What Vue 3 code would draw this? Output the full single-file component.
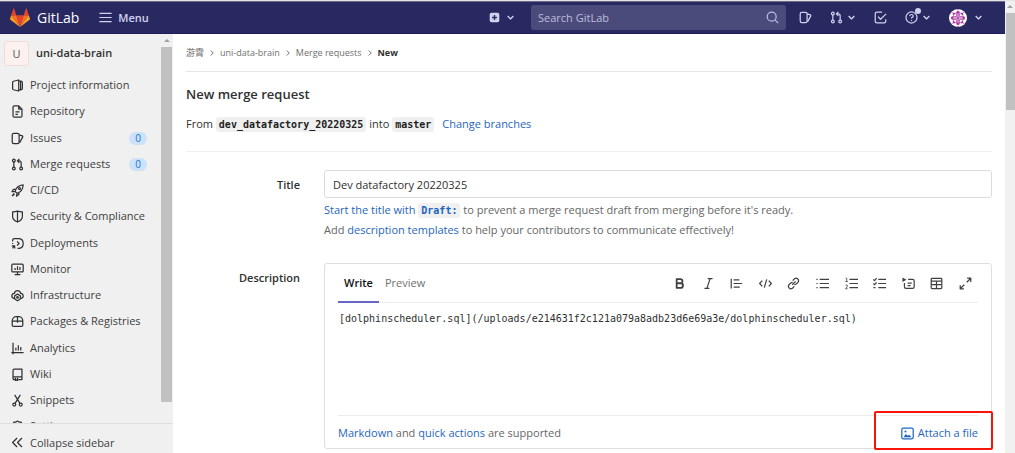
<script setup>
import { ref } from 'vue'

const icons = {
  project: '<path d="M9.5 1.2 3 2.8Q2 3.1 2 4v8q0 .9 1 1.2l6.500 1.600z"/><path d="M9.500 2.500H12Q14 2.500 14 4.500v7q0 2-2 2H9.500M11.800 3v10"/>',
  repository: '<path d="M9.500 1H4Q2.500 1 2.500 2.500v11Q2.500 15 4 15h8q1.500 0 1.500-1.500V5zM9.500 1v4h4M5.500 8.500h5M5.500 11.500h3"/>',
  issues: '<rect x="1.500" y="1.800" width="8.500" height="12.400" rx="2"/><path d="M10 3.500l4 1.300q.8.4.5 1.200L11 12.500H10"/>',
  merge: '<circle cx="3.500" cy="12.800" r="1.700"/><circle cx="3.500" cy="3.200" r="1.700"/><circle cx="12.500" cy="12.800" r="1.700"/><path d="M3.500 5v6M12.500 11V6q0-2.500-2.500-2.500H8M10.300 1 7.800 3.500l2.500 2.500"/>',
  rocket: '<path d="M5 9Q7 2 15 1.200 14.500 9 7.500 11.500zM6 6.500H3L1.200 9.500 5 9M9.700 10v3l-3 2 .8-3.500M3.800 11.500l-2.300 3 3-1.800"/><circle cx="10.500" cy="5.500" r="1.200"/>',
  shield: '<path d="M8 1.200Q5 2.300 2 2.200V8q0 4.500 6 6.800 6-2.300 6-6.800V2.200Q11 2.300 8 1.200zM8 1.200v13.600"/>',
  deploy: '<path d="M2 5.500V4q0-2 2-2h6q5 .5 5 6t-5 6H8M1 11h3.500v3M4.500 11.200Q2.500 12 2 14M1.300 8h1.500"/><path d="m7.500 5.500 2.500 2.500-2.500 2.500"/>',
  monitor: '<rect x="1" y="1.500" width="14" height="9.500" rx="1.200"/><path d="M5 6v2.500M8 4v4.500M11 5v3.500M8 11v3M4.500 14.300h7"/>',
  infra: '<path d="M4 11.500Q1 11 1 8.500T4 5.500Q5 2 8 2t4 3.500q3 .5 3 3t-3 3"/><path d="m8 6.300 3.500 2v4L8 14.500l-3.500-2.200v-4z"/><circle cx="8" cy="10.400" r="1"/>',
  package: '<path d="M1.500 7q0-1.500 1-3Q4 2 6 2h4q2 0 3.500 2 1 1.500 1 3v5.500q0 1.500-1.500 1.500H3q-1.500 0-1.500-1.500zM1.500 7.500h13M8 2v7.500"/>',
  analytics: '<path d="M2.500 1v12h13M.5 13h2v2M6 7v3.500M9 4v6.500M12 6v4.500"/>',
  wiki: '<path d="M13.500 11V1.500H4Q2.500 1.500 2.500 3v9.500M13.500 11H4q-1.500 0-1.500 1.600T4 14.200h1M13.500 11v3.200H9"/><path d="M5.500 12v3.500l1.300-1 1.300 1V12"/>',
  snippets: '<circle cx="4" cy="13" r="1.800"/><circle cx="12" cy="13" r="1.800"/><path d="m5 11.500 6.500-10.500M11 11.500 4.500 1"/>',
  settings: '<path d="m8 1.300 2 1.300 2.500-.1.800 2.400 1.700 2L14 9l.200 2.500-2.400.800L10 14H6l-1.800-1.700-2.400-.8L2 9 1 6.900l1.700-2 .8-2.400 2.500.1z"/><circle cx="8" cy="8" r="2.200"/>',
  collapse: '<path d="M7.500 2.500 2 8l5.500 5.500M13.500 2.500 8 8l5.500 5.500"/>',
  chevron: '<path d="m3 5.500 5 5 5-5"/>',
  right: '<path d="m5.500 3 5 5-5 5"/>',
  search: '<circle cx="7" cy="7" r="5.500"/><path d="m11 11 4 4"/>',
  todo: '<path d="M10 1.500H3.500q-2 0-2 2v9q0 2 2 2h9q2 0 2-2V10"/><path d="m5 7 3 3.200L15 3.500"/>',
  help: '<circle cx="8" cy="8" r="6.800"/><path d="M5.800 6.300Q6 4.300 8 4.300t2.200 1.900Q10.200 7.300 8 8.500v.8M8 11v1.300"/>',
  menu: '<path d="M.5 3h15M.5 8h15M.5 13h15"/>',
  plus: '<rect x="1" y="1" width="14" height="14" rx="2.500" fill="currentColor" stroke="none"/><path d="M8 4.500v7M4.500 8h7" stroke="#292961" stroke-width="2"/>',
  bold: '<path d="M4.500 2.500H9q2.600 0 2.600 2.600T9 7.700H4.500zM4.500 7.700h5q2.800 0 2.800 2.900T9.500 13.500h-5z" stroke-width="2.200"/>',
  italic: '<path d="M7 2h6M3 14h6M10 2 6 14"/>',
  quote: '<path d="M1.500 2v12M4.500 3.500h7M4.500 8H15M4.500 12.500H12"/>',
  code: '<path d="M4 4.500.8 8 4 11.500M12 4.500 15.200 8 12 11.500M9.500 3l-3 10"/>',
  link: '<path d="m6.500 9.500 4-4M7 4.500l2.300-2.300q2.200-1.500 4 .2t.3 4L11.500 8.500q-1 1-2.500 1M9 11.500l-2.300 2.300q-2.200 1.500-4-.2t-.3-4L4.500 7.500q1-1 2.500-1"/>',
  bullets: '<path d="M4.500 3H16M4.500 8H16M4.500 13H16M.5 3H2M.5 8H2M.5 13H2"/>',
  numbers: '<path d="M5.500 3H16M5.500 8H16M5.500 13H16"/><path d="M.8 1.500h1.300v4M.5 5.500h3M.7 10h2v2l-2 2.500h2.500" stroke-width="1"/>',
  tasks: '<path d="M6.500 3H16M6.500 8H16M6.500 13H16M.5 3 2 4.500l2.500-3M.5 8 2 9.500l2.500-3M.5 13H3"/>',
  details: '<path d="M7.500 3H13q2 0 2 2v7q0 2-2 2H5q-2 0-2-2V7.500M7 7.500h5M7 10.500h3.500"/><path d="m.5.500 5 2.800-5 2.800z" fill="currentColor" stroke="none"/>',
  table: '<rect x="1.500" y="1.800" width="13" height="12.400" rx="1"/><path d="M1.500 5h13M1.500 9.500h13M8 5v9" />',
  expand: '<path d="M10 1.500h4.500V6M14.500 1.500 9.500 6.500M6 14.500H1.500V10M1.500 14.500l5-5"/>',
  image: '<rect x="1" y="1.500" width="14" height="13" rx="1.500"/><path d="M3 12.500 6 8.500l2.300 2.300L10 9.500l3 3z" fill="currentColor" stroke="none"/><circle cx="5.500" cy="5.500" r="1.300" fill="currentColor" stroke="none"/>',
}

const nav = [
  { icon: 'project', label: 'Project information' },
  { icon: 'repository', label: 'Repository' },
  { icon: 'issues', label: 'Issues', count: 0 },
  { icon: 'merge', label: 'Merge requests', count: 0 },
  { icon: 'rocket', label: 'CI/CD' },
  { icon: 'shield', label: 'Security & Compliance' },
  { icon: 'deploy', label: 'Deployments' },
  { icon: 'monitor', label: 'Monitor' },
  { icon: 'infra', label: 'Infrastructure' },
  { icon: 'package', label: 'Packages & Registries' },
  { icon: 'analytics', label: 'Analytics' },
  { icon: 'wiki', label: 'Wiki' },
  { icon: 'snippets', label: 'Snippets' },
  { icon: 'settings', label: 'Settings' },
]

const tools = [
  ['bold', 'Bold'], ['italic', 'Italic'], ['quote', 'Quote'], ['code', 'Code'],
  ['link', 'Link'], ['bullets', 'Bullet list'], ['numbers', 'Numbered list'],
  ['tasks', 'Task list'], ['details', 'Collapsible section'], ['table', 'Table'],
  ['expand', 'Full screen'],
]

const title = ref('Dev datafactory 20220325')
const description = ref('[dolphinscheduler.sql](/uploads/e214631f2c121a079a8adb23d6e69a3e/dolphinscheduler.sql)')
const query = ref('')
</script>

<template>
  <div class="window">
    <div class="app">
      <header class="topbar">
        <a class="brand" href="#">
          <svg class="logo" viewBox="0 0 36 34" aria-hidden="true">
            <path fill="#e24329" d="M18 34 24.600 13H11.400z" />
            <path fill="#fc6d26" d="M18 34 11.400 13H2.100zM18 34l6.600-21h9.300z" />
            <path fill="#fca326" d="M2.100 13 .1 19.300q-.3 1 .6 1.700L18 34zM33.900 13l2 6.300q.3 1-.6 1.700L18 34z" />
            <path fill="#e24329" d="M2.100 13h9.300L7.400.800q-.7-1.200-1.300 0zM33.900 13h-9.300L28.600.800q.7-1.200 1.300 0z" />
          </svg>
          <span>GitLab</span>
        </a>
        <button class="menu" type="button">
          <svg class="icon" viewBox="0 0 16 16" v-html="icons.menu"></svg>Menu
        </button>
        <div class="actions">
          <button class="drop create" type="button" aria-label="Create new">
            <svg class="icon small" viewBox="0 0 16 16" v-html="icons.plus"></svg>
            <svg class="icon caret" viewBox="0 0 16 16" v-html="icons.chevron"></svg>
          </button>
          <label class="search">
            <input v-model="query" type="text" placeholder="Search GitLab" aria-label="Search GitLab" />
            <svg class="icon" viewBox="0 0 16 16" v-html="icons.search"></svg>
          </label>
          <button class="drop" type="button" aria-label="Issues">
            <svg class="icon" viewBox="0 0 16 16" v-html="icons.issues"></svg>
          </button>
          <button class="drop" type="button" aria-label="Merge requests">
            <svg class="icon" viewBox="0 0 16 16" v-html="icons.merge"></svg>
            <svg class="icon caret" viewBox="0 0 16 16" v-html="icons.chevron"></svg>
          </button>
          <button class="drop" type="button" aria-label="To-do list">
            <svg class="icon" viewBox="0 0 16 16" v-html="icons.todo"></svg>
          </button>
          <button class="drop help" type="button" aria-label="Help">
            <svg class="icon" viewBox="0 0 16 16" v-html="icons.help"></svg>
            <span class="dot"></span>
            <svg class="icon caret" viewBox="0 0 16 16" v-html="icons.chevron"></svg>
          </button>
          <button class="drop user" type="button" aria-label="Account">
            <svg class="avatar" viewBox="0 0 18 18">
              <circle cx="9" cy="9" r="9" fill="#fff" />
              <g fill="none" stroke="#a8329e">
                <path stroke-width="1.200" d="M9 4v10M4 9h10" />
                <path stroke-width="1.800" d="M7.500 3.800 9 2.800l1.500 1M14.200 7.500l1 1.500-1 1.500M10.500 14.200 9 15.200l-1.500-1M3.800 10.500 2.800 9l1-1.500" />
                <path d="M7.500 4v3.500H4M10.500 4v3.500H14M7.500 14v-3.500H4M10.500 14v-3.500H14" stroke-width=".7" />
                <path stroke-width="1.400" d="M4.500 6.500v-2h2M11.500 4.500h2v2M13.500 11.500v2h-2M6.500 13.500h-2v-2" />
              </g>
              <path fill="#a8329e" d="M8 .2h2L9 1.500zM8 17.800h2L9 16.500zM2.600 2.800l1.300.4-.9.900zM15.400 2.800l-1.300.4.9.9zM2.600 15.200l1.300-.4-.9-.9zM15.400 15.200l-1.300-.4.9-.9z" />
            </svg>
            <svg class="icon caret" viewBox="0 0 16 16" v-html="icons.chevron"></svg>
          </button>
        </div>
      </header>

      <div class="body">
        <aside class="sidebar">
          <div class="side-scroll">
            <div class="side-main">
              <a class="context" href="#"><span class="letter">U</span>uni-data-brain</a>
              <ul>
                <li v-for="item in nav" :key="item.label">
                  <a href="#">
                    <svg class="icon" viewBox="0 0 16 16" v-html="icons[item.icon]"></svg>
                    <span>{{ item.label }}</span>
                    <span v-if="item.count !== undefined" class="badge">{{ item.count }}</span>
                  </a>
                </li>
              </ul>
            </div>
            <div class="side-track"><i class="up"></i><i class="side-thumb"></i></div>
          </div>
          <button class="collapse" type="button">
            <svg class="icon" viewBox="0 0 16 16" v-html="icons.collapse"></svg>Collapse sidebar
          </button>
        </aside>

        <main>
          <nav class="crumbs" aria-label="Breadcrumb">
            <a href="#">游霄</a><svg class="icon" viewBox="0 0 16 16" v-html="icons.right"></svg>
            <a href="#">uni-data-brain</a><svg class="icon" viewBox="0 0 16 16" v-html="icons.right"></svg>
            <a href="#">Merge requests</a><svg class="icon" viewBox="0 0 16 16" v-html="icons.right"></svg>
            <b>New</b>
          </nav>
          <h1>New merge request</h1>
          <p class="branches">
            From <code>dev_datafactory_20220325</code> into <code>master</code>
            <a href="#">Change branches</a>
          </p>

          <form @submit.prevent>
            <label class="name" for="mr-title">Title</label>
            <div>
              <input id="mr-title" v-model="title" class="title" type="text" />
              <p class="hint"><a href="#">Start the title with <code>Draft:</code></a> to prevent a merge request draft from merging before it's ready.</p>
              <p class="hint">Add <a href="#">description templates</a> to help your contributors to communicate effectively!</p>
            </div>
            <label class="name desc" for="mr-description">Description</label>
            <div class="editor">
              <div class="tabs">
                <button class="tab active" type="button">Write</button>
                <button class="tab" type="button">Preview</button>
                <div class="tools">
                  <button v-for="[icon, label] in tools" :key="icon" type="button" :aria-label="label">
                    <svg class="icon" viewBox="0 0 16 16" v-html="icons[icon]"></svg>
                  </button>
                </div>
              </div>
              <textarea id="mr-description" v-model="description" spellcheck="false"></textarea>
              <div class="foot">
                <span><a href="#">Markdown</a> and <a href="#">quick actions</a> are supported</span>
                <button class="attach" type="button">
                  <svg class="icon" viewBox="0 0 16 16" v-html="icons.image"></svg>Attach a file
                </button>
              </div>
            </div>
          </form>
        </main>
      </div>
    </div>
    <div class="page-track"><i class="up"></i><i class="page-thumb"></i></div>
  </div>
</template>

<style>
body { overflow: hidden; }
</style>

<style scoped>
* { box-sizing: border-box; }
.window {
  display: flex;
  height: 100vh;
  border-top: 1px solid #e4e4e4;
  background: #fff;
  color: #303030;
  font: 11px/16px "Open Sans", "Noto Sans CJK SC", sans-serif;
}
.app { flex: 1; min-width: 0; display: flex; flex-direction: column; }
a { color: #1f65c0; text-decoration: none; }
button { border: 0; padding: 0; background: none; font: inherit; color: inherit; }
p, h1, ul { margin: 0; padding: 0; font-weight: 400; }
.icon {
  width: 13px;
  height: 13px;
  flex: none;
  fill: none;
  stroke: currentColor;
  stroke-width: 1.5;
  stroke-linejoin: round;
}
.icon.small { width: 11px; height: 11px; }
.icon.caret { width: 9px; height: 9px; stroke-width: 2.4; }

.topbar {
  display: flex;
  align-items: center;
  flex: none;
  height: 33px;
  padding: 0 22px 0 10px;
  border-top: 1px solid #6a6a8c;
  border-bottom: 1px solid #1c1c5c;
  background: #292961;
  color: #d1d1f0;
}
.brand { display: flex; align-items: center; gap: 7px; color: #fff; font-size: 14px; }
.logo { width: 20px; height: 19px; }
.menu { display: flex; align-items: center; gap: 6px; margin-left: 20px; font-weight: 600; }
.actions { display: flex; align-items: center; gap: 18px; margin-left: auto; }
.drop { display: flex; align-items: center; gap: 4px; }
.create { gap: 6px; margin-right: -2px; }
.user { gap: 7px; }
.search {
  display: flex;
  align-items: center;
  width: 255px;
  height: 25px;
  padding: 0 7px;
  margin-right: -5px;
  border-radius: 3px;
  background: #4b4b7b;
  color: #bdbddc;
}
.search input {
  flex: 1;
  min-width: 0;
  padding: 0;
  border: 0;
  outline: 0;
  background: none;
  color: inherit;
  font: inherit;
}
.search input::placeholder { color: #bdbddc; opacity: 1; }
.help { position: relative; }
.dot { position: absolute; left: 10px; top: -3px; width: 6px; height: 6px; border-radius: 50%; background: #d1d1f0; }
.avatar { width: 18px; height: 18px; }

.body { flex: 1; min-height: 0; display: flex; }
.sidebar { width: 173px; flex: none; display: flex; flex-direction: column; background: #f0f0f0; }
.side-scroll { flex: 1; min-height: 0; display: flex; overflow: hidden; }
.side-main { flex: 1; }
.context { display: flex; align-items: center; gap: 7px; padding: 6px 4px; height: 38px; color: #303030; font-weight: 600; }
.letter {
  width: 25px;
  height: 25px;
  border: 1px solid #f0dcd8;
  border-radius: 3px;
  background: #fcf1ef;
  color: #555;
  font-weight: 400;
  line-height: 23px;
  text-align: center;
}
ul { list-style: none; }
li:nth-child(4n + 2) { margin-bottom: 1px; }
li a { display: flex; align-items: center; gap: 6px; height: 26px; padding: 0 14px 0 11px; color: #404040; }
li .icon, .collapse .icon { color: #303030; }
.badge {
  width: 18px;
  height: 13px;
  margin-left: auto;
  border-radius: 7px;
  background: #cbe2f9;
  color: #1f75cb;
  font-size: 10px;
  line-height: 13px;
  text-align: center;
}
.side-track { width: 12px; margin-top: 1px; }
.up { display: block; width: 0; margin: 4px auto 5px; border: 3px solid transparent; border-top: 0; border-bottom-color: #a0a0a0; }
.side-thumb { display: block; height: 355px; margin-right: 1px; background: #c1c1c1; }
.collapse {
  display: flex;
  align-items: center;
  gap: 6px;
  height: 30px;
  padding: 8px 11px 0;
  border-top: 1px solid #dedede;
  color: #404040;
}

main { flex: 1; min-width: 0; padding: 0 13px; overflow: hidden; }
.crumbs { display: flex; align-items: center; gap: 4px; height: 38px; border-bottom: 1px solid #e5e5e5; font-size: 9px; }
.crumbs a { color: #707070; }
.crumbs .icon { width: 8px; height: 8px; color: #707070; stroke-width: 2; }
.crumbs b { font-weight: 700; }
h1 { padding: 12px 0; font-size: 13px; line-height: 20px; font-weight: 600; }
.branches { height: 36px; border-bottom: 1px solid #f0f0f0; }
code {
  padding: 2px 3px;
  border-radius: 3px;
  background: #f0f0f0;
  font: 700 10px/14px "DejaVu Sans Mono", monospace;
  color: #1f1f1f;
}
.branches a { margin-left: 8px; }
form { display: grid; grid-template-columns: 114px 1fr; column-gap: 24px; padding-top: 18px; }
.name { padding-top: 7px; text-align: right; font-weight: 600; }
.title {
  display: block;
  width: 100%;
  height: 28px;
  margin-bottom: 2px;
  padding: 0 8px;
  border: 1px solid #dcdcdc;
  border-radius: 3px;
  color: #303030;
  font: inherit;
}
.hint { color: #666; line-height: 20px; }
.hint code { color: #1f65c0; }
.desc { padding-top: 30px; }
.editor { margin-top: 23px; padding: 0 13px; border: 1px solid #dfdfdf; border-radius: 3px; }
.tabs { display: flex; height: 39px; border-bottom: 1px solid #ececec; }
.tab { padding: 0 6px; color: #707070; }
.tab.active { height: 39px; border-bottom: 2px solid #6666c4; color: #111; font-weight: 600; }
.tools { display: flex; justify-content: space-between; align-items: center; width: 305px; margin-left: auto; padding-right: 6px; }
.tools button { height: 13px; color: #404040; }
textarea {
  display: block;
  width: 100%;
  height: 113px;
  padding: 8px 1px;
  border: 0;
  border-bottom: 1px solid #ececec;
  outline: 0;
  resize: none;
  color: #303030;
  font: 10px/16px "DejaVu Sans Mono", monospace;
}
.foot { display: flex; justify-content: space-between; align-items: center; height: 32px; padding-top: 2px; color: #666; }
.attach {
  position: relative;
  display: flex;
  align-items: center;
  gap: 4px;
  color: #1f65c0;
}
.attach::after {
  content: "";
  position: absolute;
  inset: -14px -15px -9px -27px;
  border: 2px solid #f8130b;
  border-radius: 2px;
}
.page-track { width: 10px; flex: none; background: #f1f1f1; }
.page-thumb { display: block; height: 97px; margin-left: 1px; background: #c1c1c1; }
</style>
